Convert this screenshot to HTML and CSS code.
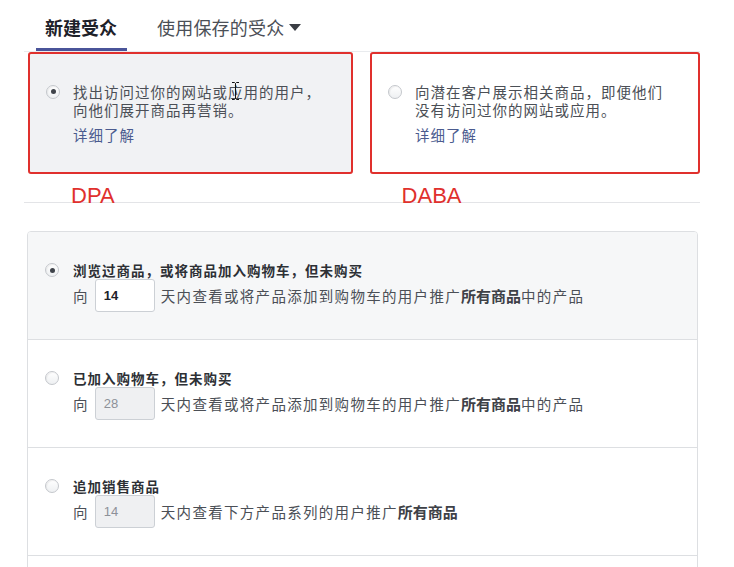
FILE: index.html
```html
<!DOCTYPE html>
<html lang="zh-CN">
<head>
<meta charset="utf-8">
<title>受众</title>
<link rel="stylesheet" href="styles.css">
</head>
<body>
<div class="page">
  <div class="tabs">
    <div class="tab tab-active">新建受众</div>
    <div class="tab tab-saved">使用保存的受众<span class="caret"></span></div>
  </div>

  <div class="choices">
    <div class="choice choice-selected">
      <div class="choice-main">
        <span class="radio radio-on"></span>
        <div class="choice-body">
          <div class="choice-text">找出访问过你的网站或应用的用户，<br>向他们展开商品再营销。</div>
          <a class="more" href="#">详细了解</a>
        </div>
      </div>
      <svg class="cursor" width="7" height="18" viewBox="0 0 7 18" aria-hidden="true">
        <path d="M0 0.5 H2.5 L3.5 1.5 L4.5 0.5 H7 M3.5 1.5 V16.5 M0 17.5 H2.5 L3.5 16.5 L4.5 17.5 H7" fill="none" stroke="#111" stroke-width="1"/>
      </svg>
    </div>
    <div class="choice">
      <div class="choice-main">
        <span class="radio"></span>
        <div class="choice-body">
          <div class="choice-text">向潜在客户展示相关商品，即便他们<br>没有访问过你的网站或应用。</div>
          <a class="more" href="#">详细了解</a>
        </div>
      </div>
    </div>
  </div>

  <div class="labels">
    <span class="label label-dpa">DPA</span>
    <span class="label label-daba">DABA</span>
  </div>

  <div class="card">
    <div class="row row-selected">
      <span class="radio radio-on"></span>
      <div class="row-body">
        <div class="row-title">浏览过商品，或将商品加入购物车，但未购买</div>
        <div class="row-line">
          <span>向</span>
          <span class="days">14</span>
          <span>天内查看或将产品添加到购物车的用户推广<b class="em">所有商品</b>中的产品</span>
        </div>
      </div>
    </div>
    <div class="row">
      <span class="radio"></span>
      <div class="row-body">
        <div class="row-title">已加入购物车，但未购买</div>
        <div class="row-line">
          <span>向</span>
          <span class="days days-off">28</span>
          <span>天内查看或将产品添加到购物车的用户推广<b class="em">所有商品</b>中的产品</span>
        </div>
      </div>
    </div>
    <div class="row">
      <span class="radio"></span>
      <div class="row-body">
        <div class="row-title">追加销售商品</div>
        <div class="row-line">
          <span>向</span>
          <span class="days days-off">14</span>
          <span>天内查看下方产品系列的用户推广<b class="em">所有商品</b></span>
        </div>
      </div>
    </div>
    <div class="row row-empty"></div>
  </div>
</div>
</body>
</html>
```

FILE: styles.css
```css
html, body {
  margin: 0;
  padding: 0;
  background: #ffffff;
  overflow: hidden;
}

body {
  font-family: "Noto Sans CJK SC", "Liberation Sans", sans-serif;
  color: #4b4f56;
  width: 734px;
  height: 567px;
}

.page {
  width: 676px;
  padding-left: 24px;
}

/* Tabs */
.tabs {
  display: flex;
  height: 51px;
  border-bottom: 1px solid #e9ebee;
}

.tab {
  display: flex;
  align-items: center;
  padding-top: 2px;
  font-size: 18px;
  line-height: 22px;
}

.tab-active {
  margin-left: 12px;
  padding-left: 9px;
  padding-right: 10px;
  font-weight: bold;
  color: #1d2129;
  box-shadow: inset 0 -3px 0 #4a5499;
}

.tab-saved {
  margin-left: 30px;
  color: #4b4f56;
  letter-spacing: 0.2px;
}

.caret {
  width: 0;
  height: 0;
  margin-left: 5px;
  margin-top: 2px;
  border-left: 6px solid transparent;
  border-right: 6px solid transparent;
  border-top: 7px solid #3a3d44;
}

/* Choice boxes */
.choices {
  display: flex;
  gap: 17px;
  margin-top: 0;
  padding-left: 4px;
}

.choice {
  position: relative;
  box-sizing: border-box;
  height: 122px;
  border: 2px solid #e0302d;
  border-radius: 3px;
  background: #ffffff;
  display: flex;
  align-items: center;
  padding-left: 16px;
  width: 330px;
}

.choice-selected {
  width: 325px;
  background: #f1f2f4;
}

.choice-main {
  display: flex;
  align-items: flex-start;
}

.choice .radio {
  margin-top: 2px;
}

.choice-body {
  margin-left: 13px;
}

.choice-text {
  font-size: 14.5px;
  letter-spacing: 1px;
  line-height: 18px;
  color: #4b4f56;
}

.more {
  display: block;
  margin-top: 7px;
  font-size: 14.5px;
  letter-spacing: 1px;
  line-height: 18px;
  color: #4b5b8f;
  text-decoration: none;
}

.cursor {
  position: absolute;
  left: 202px;
  top: 28px;
}

/* Radios */
.radio {
  box-sizing: border-box;
  flex: none;
  width: 14px;
  height: 14px;
  border-radius: 50%;
  border: 1px solid #c4c7cc;
  background: linear-gradient(#ffffff, #eef0f2);
  box-shadow: inset 1px 1px 1px rgba(0, 0, 0, 0.06);
  display: flex;
  align-items: center;
  justify-content: center;
}

.radio-on::after {
  content: "";
  width: 5px;
  height: 5px;
  border-radius: 50%;
  background: #3f434a;
}

/* Annotation labels */
.labels {
  box-sizing: border-box;
  height: 29px;
  border-bottom: 1px solid #e3e4e7;
  display: flex;
  padding-left: 47px;
}

.label {
  font-family: "Liberation Sans", sans-serif;
  font-size: 22px;
  line-height: 22px;
  padding-top: 11px;
  color: #e0302d;
  height: 22px;
}

.label-daba {
  margin-left: 287px;
}

/* Card list */
.card {
  margin-top: 28px;
  margin-left: 3px;
  width: 671px;
  box-sizing: border-box;
  border: 1px solid #dddfe2;
  border-radius: 4px;
  overflow: hidden;
}

.row {
  display: flex;
  align-items: flex-start;
  padding: 29px 0 27px 17px;
  border-bottom: 1px solid #dddfe2;
  background: #ffffff;
}

.row-selected {
  background: #f6f7f8;
}

.row .radio {
  margin-top: 2px;
}

.row-empty {
  height: 40px;
}

.row-body {
  margin-left: 14px;
}

.row-title {
  font-size: 13.5px;
  letter-spacing: 1px;
  line-height: 18px;
  font-weight: bold;
  color: #2d3035;
}

.row-line {
  display: flex;
  align-items: center;
  gap: 6px;
  height: 33px;
  font-size: 14.5px;
  letter-spacing: 1.3px;
  line-height: 18px;
  color: #4b4f56;
}

.days {
  box-sizing: border-box;
  width: 60px;
  height: 33px;
  border: 1px solid #ccd0d5;
  border-radius: 3px;
  background: #ffffff;
  padding-left: 8px;
  display: flex;
  align-items: center;
  font-family: "Liberation Sans", sans-serif;
  font-size: 13px;
  font-weight: bold;
  letter-spacing: 0;
  color: #1d2129;
}

.days-off {
  background: #eff0f2;
  color: #8d9199;
  font-weight: normal;
}

.em {
  font-size: 15px;
  letter-spacing: 0;
  font-weight: bold;
  color: #3e4147;
}
```
